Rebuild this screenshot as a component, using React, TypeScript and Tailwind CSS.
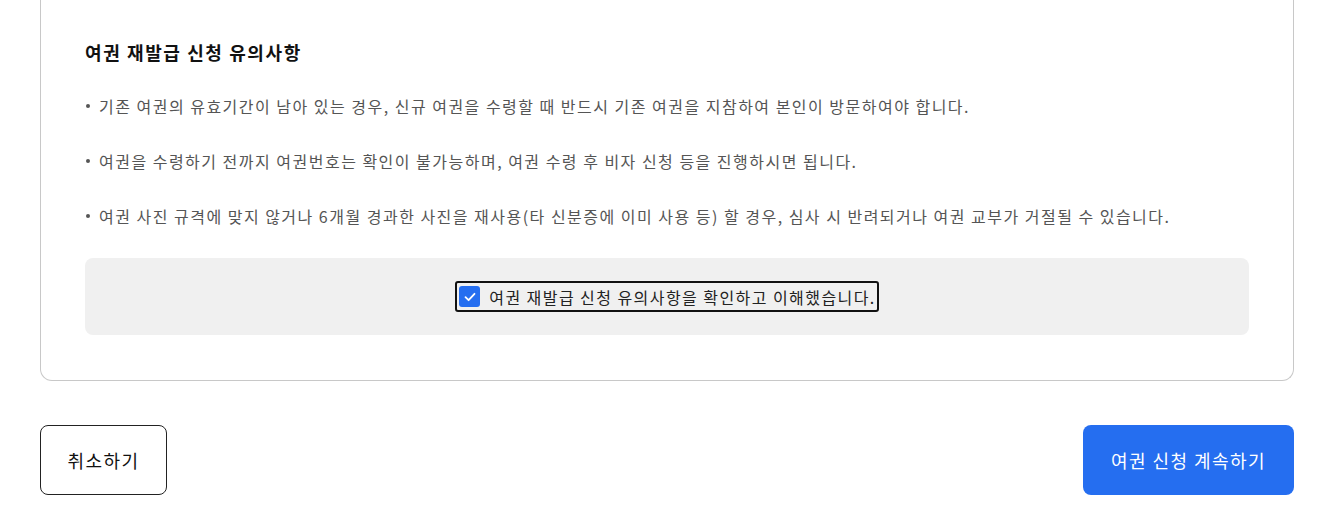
import React from "react";

const font = { fontFamily: '"Noto Sans CJK KR", "Noto Sans", sans-serif' };

const items = [
  "기존 여권의 유효기간이 남아 있는 경우, 신규 여권을 수령할 때 반드시 기존 여권을 지참하여 본인이 방문하여야 합니다.",
  "여권을 수령하기 전까지 여권번호는 확인이 불가능하며, 여권 수령 후 비자 신청 등을 진행하시면 됩니다.",
  "여권 사진 규격에 맞지 않거나 6개월 경과한 사진을 재사용(타 신분증에 이미 사용 등) 할 경우, 심사 시 반려되거나 여권 교부가 거절될 수 있습니다.",
];

export default function App() {
  return (
    <div className="w-[1320px] h-[531px] bg-white overflow-hidden tracking-[0.1em]" style={font}>
      <div className="ml-[40px] w-[1254px]">
        <div className="border-x border-b border-[#c8c8c8] rounded-b-[12px] px-[44px] pt-[38px] pb-[45px]">
          <h2 className="text-[18px] leading-[28px] font-bold text-[#111]">여권 재발급 신청 유의사항</h2>
          <ul className="mt-[28px] flex flex-col gap-[31px]">
            {items.map((t) => (
              <li key={t} className="flex items-center text-[16px] leading-[24px] text-[#555] tracking-[0.093em]">
                <span className="w-[4px] h-[4px] rounded-full bg-[#555] ml-[1px] mr-[9px]" />
                <span>{t}</span>
              </li>
            ))}
          </ul>
          <div className="mt-[30px] h-[77px] bg-[#f0f0f0] rounded-[8px] flex items-center justify-center">
            <label className="flex items-center gap-[9px] border-2 border-[#111] rounded-[3px] pl-[2px] pr-[1px] h-[31px] text-[16px] text-[#222]">
              <span className="w-[21px] h-[21px] rounded-[3px] bg-[#256ef0] flex items-center justify-center">
                <svg width="14" height="14" viewBox="0 0 14 14" fill="none">
                  <path d="M2.5 7.2 L5.6 10.2 L11.5 3.8" stroke="white" strokeWidth="1.8" strokeLinecap="round" strokeLinejoin="round" />
                </svg>
              </span>
              <span className="tracking-[0.09em]">여권 재발급 신청 유의사항을 확인하고 이해했습니다.</span>
            </label>
          </div>
        </div>
        <div className="mt-[44px] flex justify-between">
          <button className="w-[127px] h-[70px] border border-[#222] rounded-[8px] text-[18px] text-[#111] bg-white tracking-[0.08em]">취소하기</button>
          <button className="w-[211px] h-[70px] rounded-[8px] bg-[#256ef0] text-[18px] text-white tracking-[0.08em]">여권 신청 계속하기</button>
        </div>
      </div>
    </div>
  );
}
